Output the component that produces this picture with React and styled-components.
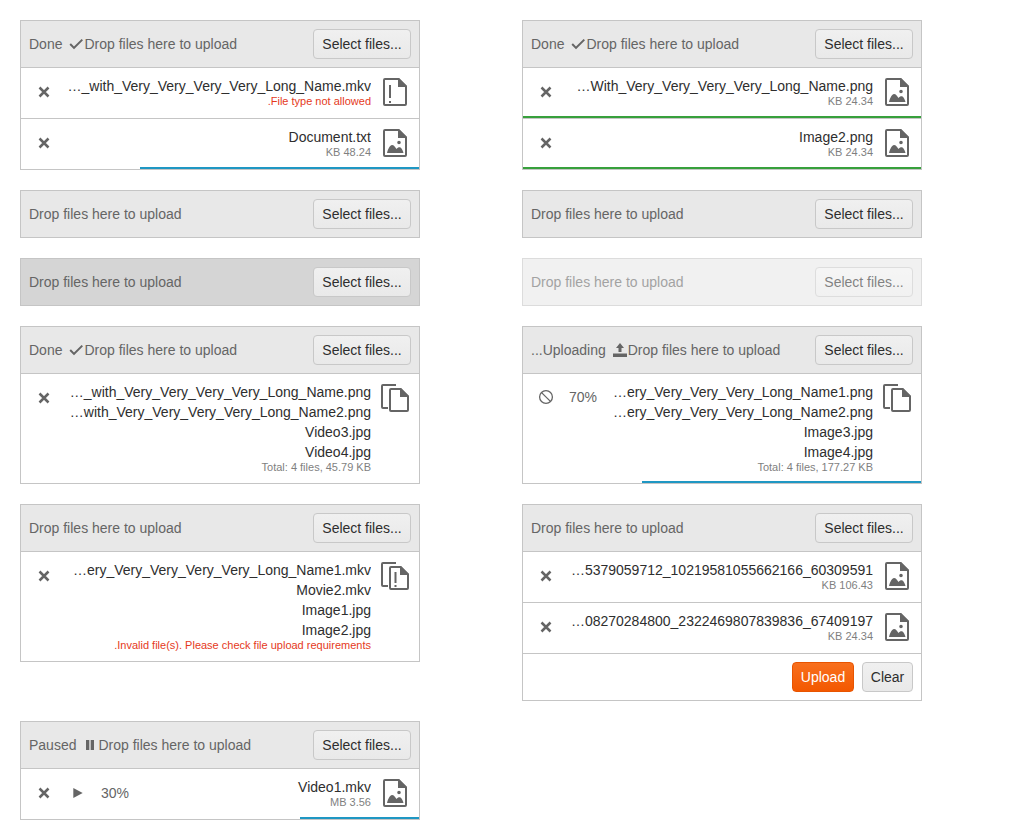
import React from "react";
import styled, { createGlobalStyle } from "styled-components";

const GlobalStyle = createGlobalStyle`
    body {
        margin: 0;
        background: #fff;
        font-family: "Liberation Sans", Arial, sans-serif;
        font-size: 14px;
        color: #2e2e2e;
    }
`;

const Page = styled.div`
    display: grid;
    grid-template-columns: 400px 400px;
    column-gap: 102px;
    row-gap: 20px;
    align-items: start;
    padding: 20px;
`;

const Upload = styled.div`
    border: 1px solid #c5c5c5;
    box-sizing: border-box;
    opacity: ${(p) => (p.$disabled ? 0.6 : 1)};
`;

const Header = styled.div`
    display: flex;
    align-items: center;
    justify-content: space-between;
    padding: 8px;
    background: ${(p) => (p.$hover ? "#d5d5d5" : "#e8e8e8")};
    color: #656565;
    line-height: 20px;
`;

const Left = styled.div`
    display: flex;
    align-items: center;
`;

const Status = styled.span`
    display: flex;
    align-items: center;
    direction: rtl;
    margin-right: 6px;
`;

const StatusIcon = styled.svg`
    width: 16px;
    height: 16px;
    display: block;
    fill: #656565;
    flex: none;
`;

const Button = styled.button`
    box-sizing: border-box;
    flex: none;
    width: ${(p) => p.$width}px;
    height: 30px;
    padding: 0;
    border: 1px solid ${(p) => (p.$primary ? "#e85400" : "#c8c8c8")};
    border-radius: 4px;
    background: ${(p) =>
        p.$primary ? "linear-gradient(#f8701e, #f35800)" : "linear-gradient(#f0f0f0, #e9e9e9)"};
    color: ${(p) => (p.$primary ? "#fff" : "#2e2e2e")};
    font: inherit;
    line-height: 20px;
`;

const Row = styled.div`
    position: relative;
    display: flex;
    align-items: flex-start;
    padding: 8px;
    min-height: 34px;
    border-top: 1px solid #c5c5c5;
`;

const CancelButton = styled.div`
    width: 30px;
    height: 32px;
    flex: none;
    display: flex;
    align-items: center;
    justify-content: center;
    margin-right: ${(p) => (p.$tight ? "4px" : "0")};
`;

const Glyph = styled.svg`
    width: 16px;
    height: 16px;
    display: block;
    fill: #656565;
`;

const Percent = styled.div`
    flex: none;
    margin-left: 8px;
    line-height: ${(p) => (p.$files ? "30px" : "32px")};
    color: #656565;
`;

const Names = styled.div`
    flex: 1;
    min-width: 0;
    margin: 0 8px;
    padding-bottom: 1px;
    direction: rtl;
    text-align: right;
`;

const Name = styled.div`
    line-height: 20px;
    white-space: nowrap;
    overflow: hidden;
    text-overflow: ellipsis;
`;

const Info = styled.div`
    margin-top: -1px;
    font-size: 11px;
    line-height: 13px;
    color: ${(p) => (p.$error ? "#e5391b" : "#7f7f7f")};
`;

const FileGlyph = styled.svg`
    width: 32px;
    height: 32px;
    flex: none;
    display: block;
`;

const Progress = styled.div`
    position: absolute;
    right: 0;
    bottom: 0;
    height: 2px;
    background: ${(p) => (p.$done ? "#37a03c" : "#1f97c3")};
`;

const Footer = styled.div`
    display: flex;
    justify-content: flex-end;
    gap: 8px;
    padding: 8px;
    border-top: 1px solid #c5c5c5;
`;

const XIcon = () => (
    <Glyph viewBox="0 0 16 16">
        <path d="M3.500 3.500l9 9M12.500 3.500l-9 9" fill="none" stroke="#656565" strokeWidth="2.5" />
    </Glyph>
);

const StopIcon = () => (
    <Glyph viewBox="0 0 16 16" style={{ marginTop: -2 }}>
        <circle cx="8" cy="8" r="6.4" fill="none" stroke="#656565" strokeWidth="1.3" />
        <path d="M3.6 3.6l8.800 8.800" fill="none" stroke="#656565" strokeWidth="1.3" />
    </Glyph>
);

const PlayIcon = () => (
    <Glyph viewBox="0 0 16 16">
        <path d="M3.300 3 12.700 8 3.300 13Z" />
    </Glyph>
);

const CheckIcon = () => (
    <StatusIcon viewBox="0 0 16 16">
        <path d="M6 13.200 1.500 8.700l1.400-1.400L6 10.400l7.600-7.500L15 4.300Z" />
    </StatusIcon>
);

const UploadIcon = () => (
    <StatusIcon viewBox="0 0 16 16">
        <path d="M8 1l4 5H9.500v4h-3V6H4ZM1 11.500h14V15H1Z" />
    </StatusIcon>
);

const PauseIcon = () => (
    <StatusIcon viewBox="0 0 16 16">
        <path d="M4 3h3.300v10H4ZM8.700 3H12v10H8.700Z" />
    </StatusIcon>
);

// single file icon, the mark inside changes with the state
const FileIcon = ({ kind }) => (
    <FileGlyph viewBox="0 0 32 32">
        <path
            d="M6 3h13.500L27 10.500V28a1 1 0 0 1-1 1H6a1 1 0 0 1-1-1V4a1 1 0 0 1 1-1Z"
            fill="none"
            stroke="#656565"
            strokeWidth="2"
        />
        <path d="M19 2h1l8 8v1h-9Z" fill="#656565" />
        {kind === "image" && (
            <path
                fill="#656565"
                d="M18.200 15.500a1.800 1.800 0 1 1 3.600 0 1.800 1.800 0 0 1-3.600 0ZM8 26c1-4 3-8 5-8 2 0 3 2 4.500 4 1-1.300 2.500-2 4-1.500 1.500 1 2.500 3.500 3 5.500Z"
            />
        )}
        {kind === "error" && <path fill="#656565" d="M10 9h2v13h-2ZM10 25h2v2h-2Z" />}
    </FileGlyph>
);

const FilesIcon = ({ error }) => (
    <FileGlyph viewBox="0 0 32 32">
        <path d="M9 26H4a1 1 0 0 1-1-1V4a1 1 0 0 1 1-1h13" fill="none" stroke="#656565" strokeWidth="2" />
        <path
            d="M12 7h9.500L29 14.500V28a1 1 0 0 1-1 1H12a1 1 0 0 1-1-1V8a1 1 0 0 1 1-1Z"
            fill="none"
            stroke="#656565"
            strokeWidth="2"
        />
        <path d="M21 6h1l8 8v1h-9Z" fill="#656565" />
        {error && <path fill="#656565" d="M15.500 12h2v11h-2ZM15.500 25h2v2h-2Z" />}
    </FileGlyph>
);

const statusIcons = { done: CheckIcon, uploading: UploadIcon, paused: PauseIcon };

const UploadHeader = ({ status, statusIcon, hover }) => {
    const Icon = statusIcons[statusIcon];
    return (
        <Header $hover={hover}>
            <Left>
                {status && <Status>{status}</Status>}
                {Icon && <Icon />}
                <span>Drop files here to upload</span>
            </Left>
            <Button $width={98}>Select files...</Button>
        </Header>
    );
};

const FileRow = ({ names, info, error, icon, files, action, percent, progress, done }) => (
    <Row>
        {action === "paused" ? (
            <>
                <CancelButton $tight><XIcon /></CancelButton>
                <CancelButton><PlayIcon /></CancelButton>
            </>
        ) : (
            <CancelButton>{action === "stop" ? <StopIcon /> : <XIcon />}</CancelButton>
        )}
        {percent && <Percent $files={files}>{percent}</Percent>}
        <Names>
            {names.map((n) => (
                <Name key={n}>{n}</Name>
            ))}
            <Info $error={error}>{info}</Info>
        </Names>
        {files ? <FilesIcon error={error} /> : <FileIcon kind={icon} />}
        {progress && <Progress $done={done} style={{ width: `${progress}%` }} />}
    </Row>
);

export default function App() {
    return (
        <>
            <GlobalStyle />
            <Page>
                <Upload>
                    <UploadHeader status="Done" statusIcon="done" />
                    <FileRow
                        names={["Image_with_Very_Very_Very_Very_Long_Name.mkv"]}
                        info="File type not allowed."
                        error
                        icon="error"
                    />
                    <FileRow names={["Document.txt"]} info="48.24 KB" icon="image" progress={70} />
                </Upload>
                <Upload>
                    <UploadHeader status="Done" statusIcon="done" />
                    <FileRow
                        names={["Image_With_Very_Very_Very_Very_Long_Name.png"]}
                        info="24.34 KB"
                        icon="image"
                        progress={100}
                        done
                    />
                    <FileRow names={["Image2.png"]} info="24.34 KB" icon="image" progress={100} done />
                </Upload>

                <Upload>
                    <UploadHeader />
                </Upload>
                <Upload>
                    <UploadHeader />
                </Upload>

                <Upload>
                    <UploadHeader hover />
                </Upload>
                <Upload $disabled>
                    <UploadHeader />
                </Upload>

                <Upload>
                    <UploadHeader status="Done" statusIcon="done" />
                    <FileRow
                        files
                        names={[
                            "Image_with_Very_Very_Very_Very_Long_Name.png",
                            "Image_with_Very_Very_Very_Very_Long_Name2.png",
                            "Video3.jpg",
                            "Video4.jpg",
                        ]}
                        info="Total: 4 files, 45.79 KB"
                    />
                </Upload>
                <Upload>
                    <UploadHeader status="Uploading..." statusIcon="uploading" />
                    <FileRow
                        files
                        action="stop"
                        percent="70%"
                        names={[
                            "Image_Very_Very_Very_Very_Long_Name1.png",
                            "Image_Very_Very_Very_Very_Long_Name2.png",
                            "Image3.jpg",
                            "Image4.jpg",
                        ]}
                        info="Total: 4 files, 177.27 KB"
                        progress={70}
                    />
                </Upload>

                <Upload>
                    <UploadHeader />
                    <FileRow
                        files
                        error
                        names={[
                            "Image_Very_Very_Very_Very_Very_Long_Name1.mkv",
                            "Movie2.mkv",
                            "Image1.jpg",
                            "Image2.jpg",
                        ]}
                        info="Invalid file(s). Please check file upload requirements."
                    />
                </Upload>
                <Upload>
                    <UploadHeader />
                    <FileRow
                        names={["IMG_20245379059712_10219581055662166_60309591"]}
                        info="106.43 KB"
                        icon="image"
                    />
                    <FileRow
                        names={["IMG_20208270284800_2322469807839836_67409197"]}
                        info="24.34 KB"
                        icon="image"
                    />
                    <Footer>
                        <Button $primary $width={62}>Upload</Button>
                        <Button $width={51}>Clear</Button>
                    </Footer>
                </Upload>

                <Upload>
                    <UploadHeader status="Paused" statusIcon="paused" />
                    <FileRow
                        names={["Video1.mkv"]}
                        info="3.56 MB"
                        icon="image"
                        action="paused"
                        percent="30%"
                        progress={30}
                    />
                </Upload>
            </Page>
        </>
    );
}
